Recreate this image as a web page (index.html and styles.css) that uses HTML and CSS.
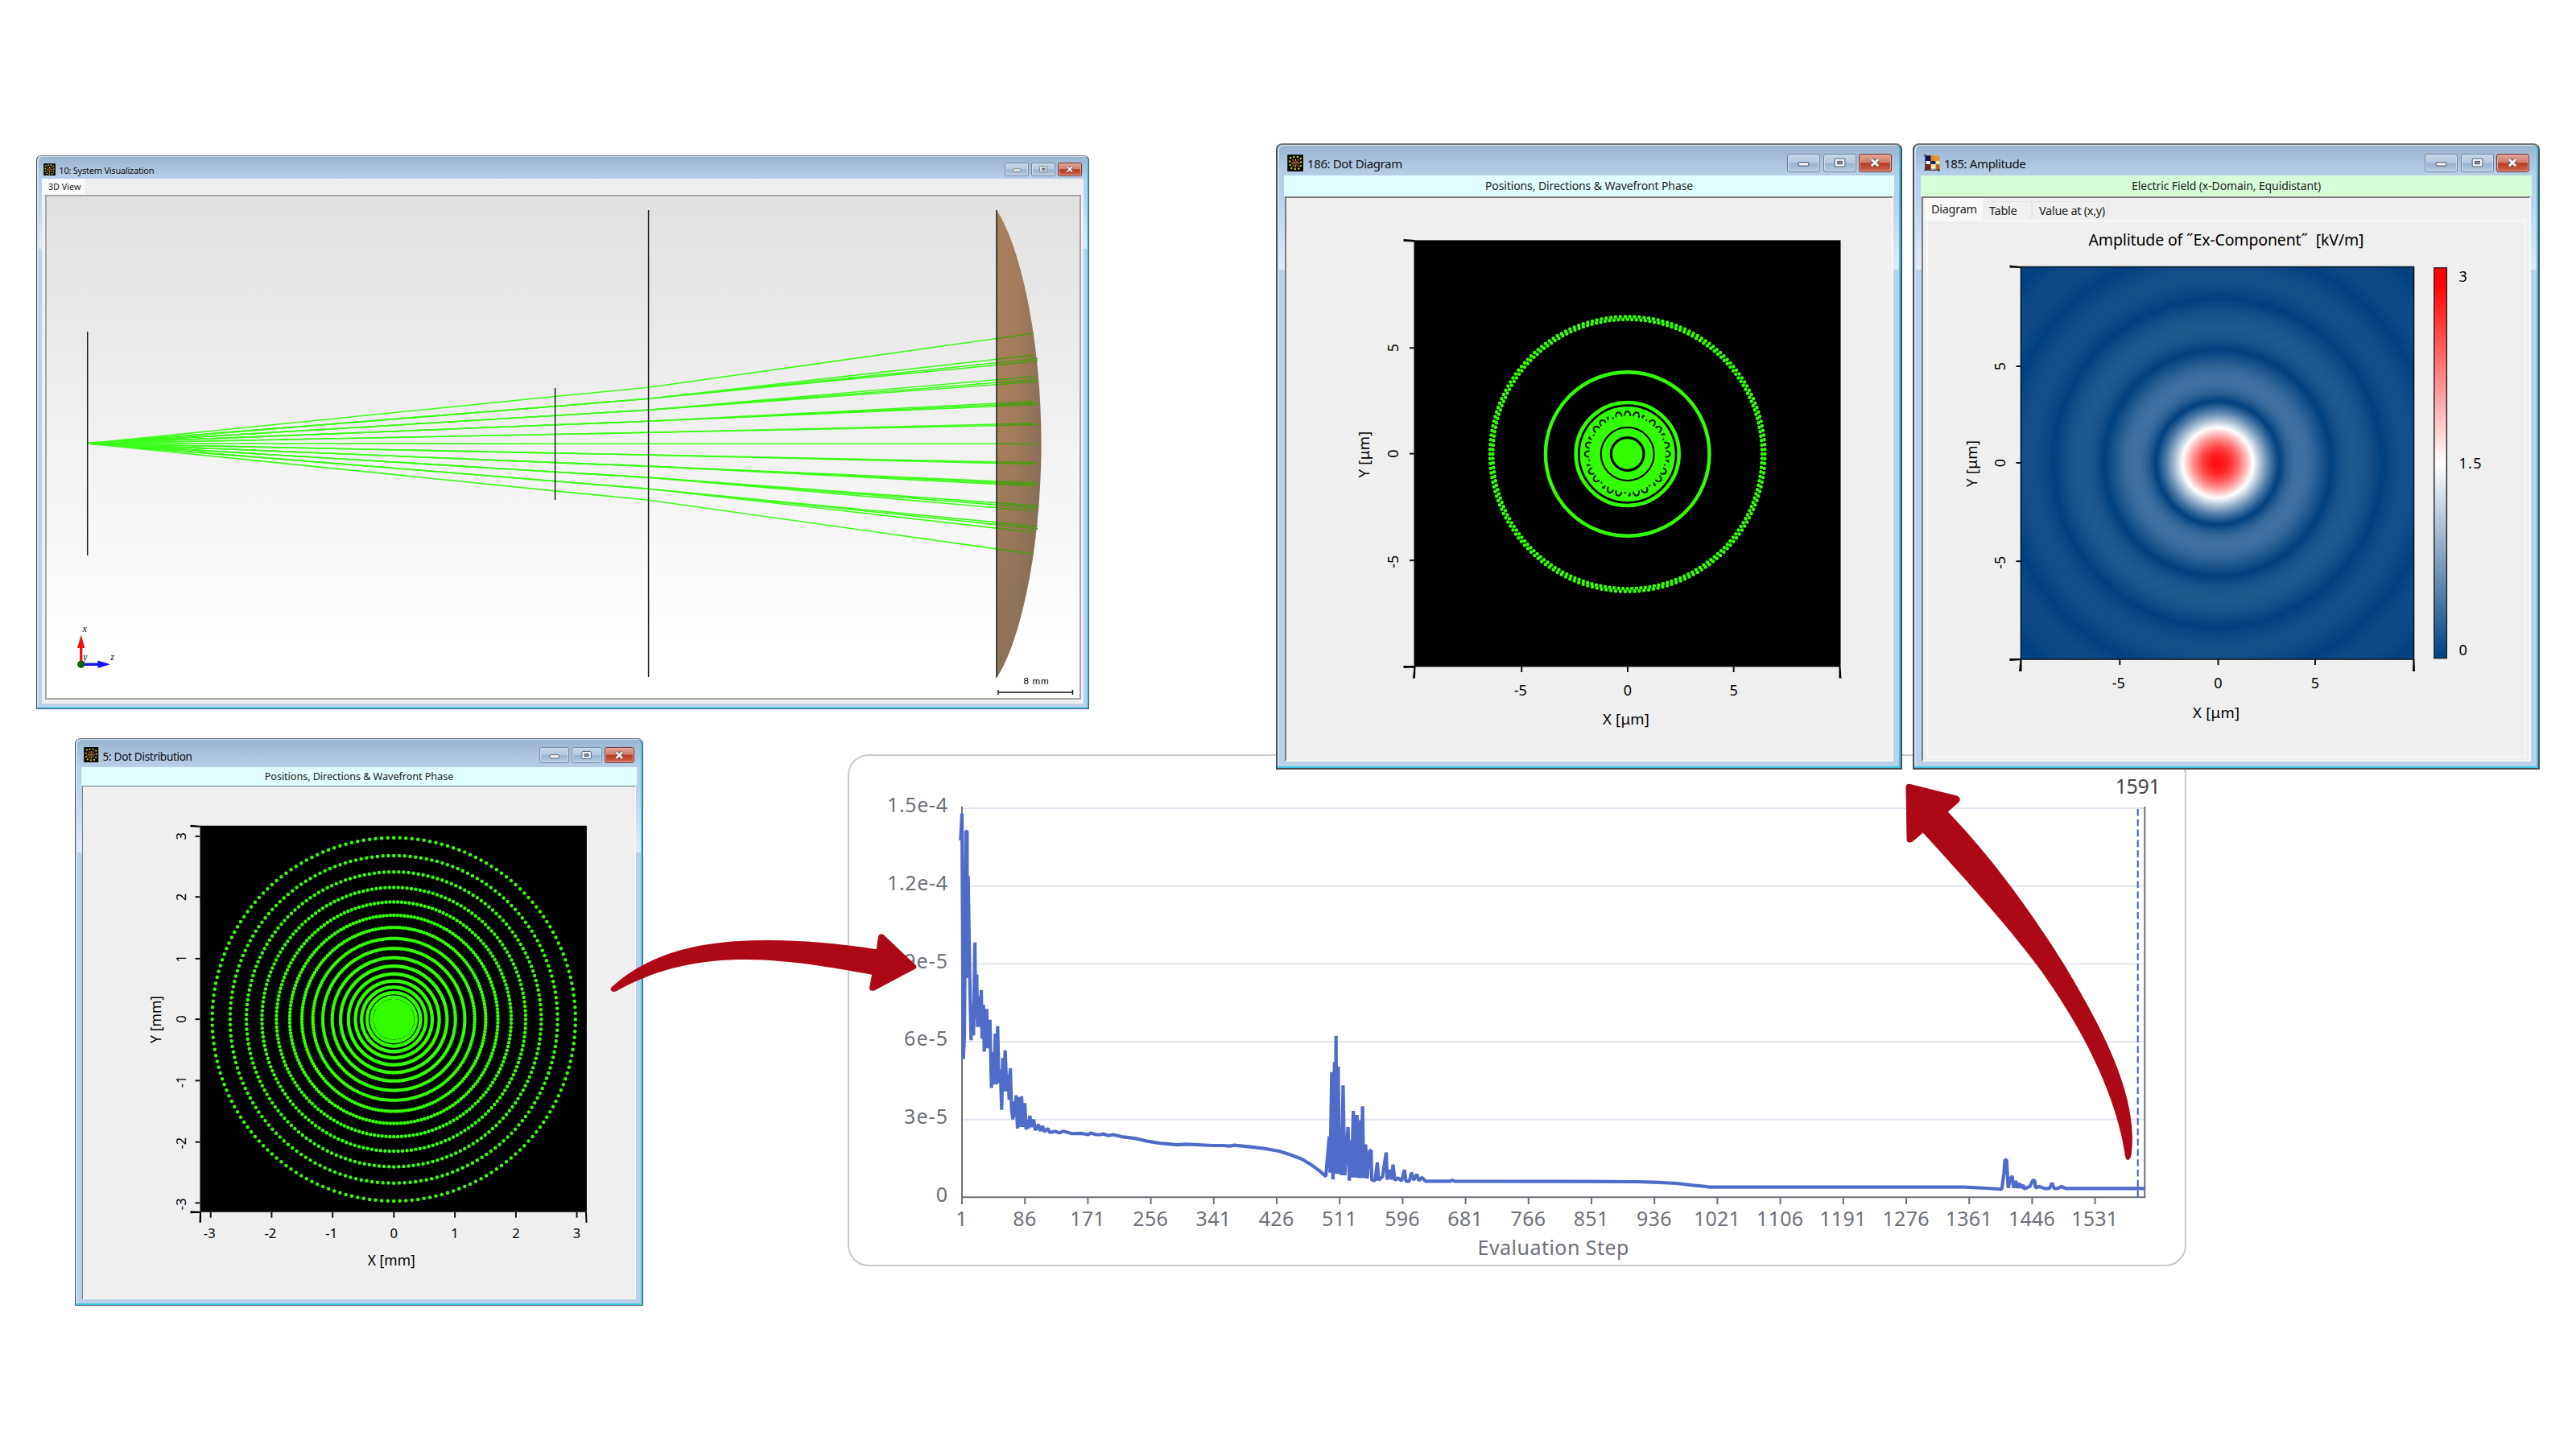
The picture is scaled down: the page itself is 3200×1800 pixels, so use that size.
FILE: index.html
```html
<!DOCTYPE html>
<html lang="en">
<head>
  <meta charset="UTF-8">
  <title>Optimization overview</title>
  <link rel="stylesheet" href="styles.css">
</head>
<body>
  <!-- shared icons -->
  <svg class="defs" width="0" height="0">
    <symbol id="icon-dots" viewBox="0 0 20 21">
      <rect width="20" height="21" fill="#0b0b06"/>
      <g fill="#c8c832">
        <circle cx="4" cy="4" r="1.2"/><circle cx="8" cy="3" r="1.2"/><circle cx="12.5" cy="3" r="1.2"/><circle cx="16.5" cy="5" r="1.2"/>
        <circle cx="3" cy="8.5" r="1.2"/><circle cx="17" cy="9.5" r="1.2"/><circle cx="3.5" cy="13" r="1.2"/><circle cx="16.5" cy="14" r="1.2"/>
        <circle cx="5" cy="17" r="1.2"/><circle cx="9.5" cy="18" r="1.2"/><circle cx="14" cy="17.5" r="1.2"/>
      </g>
      <path d="M6 6L14 15M14 6L6 15" stroke="#c2473a" stroke-width="1.8" stroke-dasharray="2 .8"/>
      <path d="M10 5.5V8M10 13V16M5 10.5H8M12 10.5H15" stroke="#9aa52e" stroke-width="1.4"/>
    </symbol>
    <symbol id="icon-field" viewBox="0 0 21 21">
      <rect x="2" y="1" width="7" height="7" fill="#14105c"/><rect x="9" y="1" width="5" height="7" fill="#f08a00"/><rect x="14" y="1" width="6" height="7" fill="#e8943a"/>
      <rect x="2" y="8" width="6" height="4" fill="#fff"/><rect x="8" y="8" width="7" height="4" fill="#1c1a66"/><rect x="15" y="8" width="5" height="4" fill="#f8f0a0"/>
      <rect x="2" y="12" width="7" height="7" fill="#7a2414"/><rect x="9" y="12" width="6" height="5" fill="#fff3b0"/><rect x="15" y="12" width="5" height="7" fill="#b8621c"/>
      <path d="M0 .8H3M2 0V19.5H21M19 18V21M0 19.5H3" fill="none" stroke="#222" stroke-width="1.2"/>
    </symbol>
    <symbol id="btn-min" viewBox="0 0 41 23">
      <rect x="13.5" y="10.5" width="14" height="5" rx="1.5" fill="#f4f4f4" stroke="#5a6678" stroke-width="1.2"/>
    </symbol>
    <symbol id="btn-max" viewBox="0 0 41 23">
      <rect x="13.5" y="5.5" width="14" height="11" rx="1.5" fill="#f4f4f4" stroke="#5a6678" stroke-width="1.2"/>
      <rect x="17.5" y="9.3" width="6" height="3.4" fill="#7f9cc4" stroke="#4a566c" stroke-width="1.2"/>
    </symbol>
    <symbol id="btn-close" viewBox="0 0 41 23">
      <path d="M15.5 6.5L24.5 15.5M24.5 6.5L15.5 15.5" stroke="#5d4a50" stroke-width="5.4"/>
      <path d="M15.5 6.5L24.5 15.5M24.5 6.5L15.5 15.5" stroke="#f6f6f6" stroke-width="3.2"/>
    </symbol>
  </svg>

  <main class="board">

    <!-- Evaluation chart -->
    <section class="chart-card">
      <svg width="1662" height="635" viewBox="1054 938 1662 635" id="chart">
        <g id="chartGrid"></g>
        <path class="axis" d="M1195 1002V1496M1194 1487.3H2665.5M2664.3 1002V1488"/>
        <g id="chartLabels"></g>
        <g class="curve">
          <path transform="translate(1040 920) scale(.33333 .42091)" d="M460 295L465 215L470 940L474 870L480 268L484 268L484 700L488 400L494 700L499 884L504 780L508 870L513 596L516 820L520 690L523 845L529 755L531 845L537 736L540 880L545 780L548 918L557 792L561 908L569 824L575 1025L582 920L586 1015L589 865L593 1015L598 843L602 1010L608 970L613 1090L617 937L621 1035L626 914L632 1035L637 985L641 1060L645 967L650 1090L655 1118L659 1065L663 1110L667 1047L672 1145L678 1052L682 1140L687 1050L692 1140L699 1070L704 1148L710 1120L712 1145L718 1107L724 1140L732 1118L738 1150L750 1133L756 1152L765 1138L772 1154L785 1145L792 1157L813 1153L828 1158L843 1153L875 1160L910 1159L935 1163L945 1158L965 1163L980 1163L993 1161L1010 1166L1028 1163L1060 1169L1110 1174L1160 1183L1210 1189L1270 1193L1300 1191L1400 1195L1442 1195"/>
          <path transform="translate(1520 1240) scale(.38265 .33333)" d="M0 549L20 551L35 548L80 553L130 560L180 570L215 583L255 600L290 625L315 647L332 664L343 515L346 650L351 275L355 676L360 237L362 650L365 140L367 655L372 255L376 655L381 490L383 660L388 325L393 660L404 480L408 680L413 530L416 668L421 420L426 668L433 435L437 670L442 455L446 670L451 403L455 670L461 545L466 672L474 568L479 568L481 678L492 679L499 612L503 678L516 665L528 575L531 676L541 640L545 676L550 620L556 678L565 670L578 680L587 640L592 682L603 682L610 650L617 678L627 656L634 680L644 668L655 682L735 682L742 679L750 682L1160 683L1340 684L1400 686L1470 690L1530 698L1568 702"/>
          <path transform="translate(2280 920) scale(.33333 .42735)" d="M-482 1296L-470 1298L0 1298L480 1298L560 1301L620 1304L628 1260L632 1219L638 1219L644 1300L653 1272L659 1266L664 1300L672 1280L678 1300L686 1287L692 1300L700 1292L704 1303L725 1296L735 1279L742 1278L746 1300L760 1296L780 1302L797 1302L808 1286L815 1302L828 1302L843 1296L858 1302L1153 1302"/>
        </g>
        <path class="marker" d="M2655.7 1005V1487"/>
        <text class="marker-label" x="2655.7" y="986" textLength="56">1591</text>
        <text class="chart-text" x="1929.5" y="1559" textLength="188" text-anchor="middle">Evaluation Step</text>
      </svg>
    </section>

    <!-- 3D system view -->
    <section class="window win-system">
      <header class="titlebar">
        <svg class="win-icon"><use href="#icon-dots"/></svg>
        <h2>10: System Visualization</h2>
        <div class="win-buttons">
          <svg class="win-btn"><use href="#btn-min"/></svg>
          <svg class="win-btn"><use href="#btn-max"/></svg>
          <svg class="win-btn close"><use href="#btn-close"/></svg>
        </div>
      </header>
      <div class="system-body">
        <div class="tab-row"><span class="tab active">3D View</span></div>
        <div class="view3d">
          <svg width="1282" height="623" viewBox="58 244 1282 623">
            <defs>
              <linearGradient id="lens" x1="0" y1="0" x2="1" y2=".25">
                <stop offset="0" stop-color="#a97f5b"/><stop offset=".5" stop-color="#a37c5a"/><stop offset="1" stop-color="#8d7058"/>
              </linearGradient>
              <linearGradient id="lensShade" x1="0" y1="0" x2="0" y2="1">
                <stop offset=".5" stop-color="#7c6a58" stop-opacity="0"/><stop offset="1" stop-color="#7c6a58" stop-opacity=".65"/>
              </linearGradient>
            </defs>
            <g id="rays"></g>
            <path fill="url(#lens)" d="M1238 261C1270 310 1293.5 430 1293.5 551S1270 793 1238 842Z"/>
            <path fill="url(#lensShade)" d="M1238 261C1270 310 1293.5 430 1293.5 551S1270 793 1238 842Z"/>
            <g id="lensRays"></g>
            <path class="plane" d="M108.7 412V690M689.6 482V621M805.6 261V841M1238 261V841.5"/>
            <path class="plane" d="M1240 860H1332.5M1240 857V863M1332.5 857V863"/>
            <text class="scale-text" x="1271.5" y="849.5" textLength="31">8 mm</text>
            <path d="M100.7 825V804" stroke="#f01414" stroke-width="3.4"/>
            <path d="M100.7 788.5L105.4 805H96Z" fill="#f01414"/>
            <path d="M100.7 825.3H122" stroke="#1414f0" stroke-width="3.4"/>
            <path d="M137 825.3L121.5 830V820.6Z" fill="#1414f0"/>
            <circle cx="100.7" cy="825.3" r="4.6" fill="#0c640c"/>
            <g class="axis-name">
              <text x="102.7" y="785">x</text><text x="103.3" y="819.5">y</text><text x="137.6" y="819.8">z</text>
            </g>
          </svg>
        </div>
      </div>
    </section>

    <!-- Dot distribution -->
    <section class="window win-distribution">
      <header class="titlebar">
        <svg class="win-icon"><use href="#icon-dots"/></svg>
        <h2>5: Dot Distribution</h2>
        <div class="win-buttons">
          <svg class="win-btn"><use href="#btn-min"/></svg>
          <svg class="win-btn"><use href="#btn-max"/></svg>
          <svg class="win-btn close"><use href="#btn-close"/></svg>
        </div>
      </header>
      <div class="band">Positions, Directions &amp; Wavefront Phase</div>
      <div class="client">
        <svg width="682" height="632" viewBox="103.5 977.3 682 632">
          <rect x="249" y="1026" width="480.4" height="480"/>
          <path d="M237 1025L249 1026V1028L237 1027.5ZM237 1504.5L249 1505V1507L237 1507.5ZM248.5 1506H250.5L250.5 1519H248ZM727.5 1506H729.5L730 1519H728Z"/>
          <g id="distTicks"></g>
          <g id="distDots" class="dots"></g>
          <text class="axis-title small" x="486.8" y="1572" textLength="59">X [mm]</text>
          <text class="axis-title small" transform="translate(200 1266.7) rotate(-90)" textLength="59">Y [mm]</text>
        </svg>
      </div>
    </section>

    <!-- Dot diagram -->
    <section class="window win-diagram">
      <header class="titlebar">
        <svg class="win-icon"><use href="#icon-dots"/></svg>
        <h2>186: Dot Diagram</h2>
        <div class="win-buttons">
          <svg class="win-btn"><use href="#btn-min"/></svg>
          <svg class="win-btn"><use href="#btn-max"/></svg>
          <svg class="win-btn close"><use href="#btn-close"/></svg>
        </div>
      </header>
      <div class="band">Positions, Directions &amp; Wavefront Phase</div>
      <div class="client">
        <svg width="751" height="697" viewBox="1598 246 751 697">
          <rect x="1756.5" y="298.4" width="530" height="530"/>
          <path d="M1743.5 297L1757 298V300.5L1743.5 300ZM1743.5 827L1757 827V829.5L1743.5 830ZM1756.5 828H1758.5L1758 842.5H1755ZM2284.5 828H2286.5L2287.5 842.5H2284.5Z"/>
          <g id="diagTicks"></g>
          <g class="dots">
            <circle cx="2021.7" cy="564" r="167.2" stroke-width="4.5" pathLength="188" stroke-dasharray="0 1"/>
            <circle cx="2021.7" cy="564" r="170.8" stroke-width="4.5" pathLength="182" stroke-dasharray="0 1"/>
            <circle cx="2021.7" cy="564" r="101.8" stroke-width="4.4"/>
            <circle cx="2021.7" cy="564" r="64" stroke-width="4.6"/>
            <circle cx="2021.7" cy="564" r="46.500" stroke-width="25"/>
            <circle cx="2021.7" cy="564" r="26.900" stroke-width="10"/>
            <circle cx="2021.7" cy="564" r="9.3" stroke-width="18.800"/>
          </g>
          <g id="curls"></g>
          <text class="axis-title" x="2019.9" y="900" textLength="58">X [μm]</text>
          <text class="axis-title" transform="translate(1701 564.6) rotate(-90)" textLength="58">Y [μm]</text>
        </svg>
      </div>
    </section>

    <!-- Amplitude -->
    <section class="window win-amplitude">
      <header class="titlebar">
        <svg class="win-icon"><use href="#icon-field"/></svg>
        <h2>185: Amplitude</h2>
        <div class="win-buttons">
          <svg class="win-btn"><use href="#btn-min"/></svg>
          <svg class="win-btn"><use href="#btn-max"/></svg>
          <svg class="win-btn close"><use href="#btn-close"/></svg>
        </div>
      </header>
      <div class="band green">Electric Field (x-Domain, Equidistant)</div>
      <div class="client">
        <div class="tabs">
          <span class="tab active">Diagram</span>
          <span class="tab">Table</span>
          <span class="tab last">Value at (x,y)</span>
        </div>
        <div class="panel">
          <svg width="740" height="664" viewBox="2395.5 275 740 664">
            <defs>
              <radialGradient id="airy" gradientUnits="userSpaceOnUse" cx="2755.5" cy="575" r="350"></radialGradient>
              <linearGradient id="scale" x1="0" y1="0" x2="0" y2="1">
                <stop offset="0" stop-color="#f00"/><stop offset=".05" stop-color="#ff0808"/><stop offset=".5" stop-color="#fff"/><stop offset="1" stop-color="#004080"/>
              </linearGradient>
            </defs>
            <text class="plot-title" x="2766" y="305" textLength="342" xml:space="preserve">Amplitude of ˝Ex-Component˝  [kV/m]</text>
            <rect x="2511" y="331.5" width="488" height="487.5" fill="url(#airy)" stroke="#0b1420" stroke-width="1.6"/>
            <path d="M2497 329.5L2511 331V333L2497 332.5ZM2497 818L2511 818V820L2497 821ZM2510 819H2512L2512 834H2508.5ZM2998 819H3000L3000.5 834H2997.5Z"/>
            <g id="ampTicks"></g>
            <rect x="3024.3" y="332.7" width="15.6" height="485" fill="url(#scale)" stroke="#222" stroke-width="1.4"/>
            <g class="tick-label left"><text x="3055" y="349.6">3</text><text x="3055" y="582" textLength="28">1.5</text><text x="3055" y="814">0</text></g>
            <text class="axis-title" x="2753.6" y="891.5" textLength="58">X [μm]</text>
            <text class="axis-title" transform="translate(2456 576) rotate(-90)" textLength="58">Y [μm]</text>
          </svg>
        </div>
      </div>
    </section>

    <!-- connecting arrows -->
    <svg class="arrows" viewBox="0 0 3200 1800">
      <path d="M760 1226C808 1183 870 1168 953 1168C1000 1168 1045 1172.5 1088.7 1179.3L1091 1163Q1093 1158.5 1098 1161.5L1137 1198.5Q1140 1201 1137 1203.5L1086 1230.5Q1080 1232 1080 1227L1083 1210.7C1030 1201 975 1192 926.7 1192C870 1192 818 1202 766 1231Q761 1233.5 758.8 1230Q758 1228 760 1226Z"/>
      <path d="M2373 974L2431 988.5Q2437.5 992 2433 997L2419.7 1008.5C2472 1062 2525 1135 2564.3 1198.6C2615 1283 2657 1365 2647.5 1435Q2646 1441 2643 1441Q2640.5 1440 2640 1436C2630 1365 2590 1280 2530 1198.6C2490 1145 2435 1085 2388.7 1034.5L2376 1045.5Q2369 1049 2368.5 1042L2367.5 978Q2368 973 2373 974Z"/>
    </svg>
  </main>

  <script>
    const NS = 'http://www.w3.org/2000/svg';

    function add(parentId, tag, attrs, text) {
      const el = document.createElementNS(NS, tag);
      for (const key in attrs) el.setAttribute(key, attrs[key]);
      if (text !== undefined) el.textContent = text;
      document.getElementById(parentId).appendChild(el);
      return el;
    }

    // chart grid, y labels and x labels
    ['1.5e-4', '1.2e-4', '9e-5', '6e-5', '3e-5', '0'].forEach((label, i) => {
      const y = 1004 + i * 96.66;
      if (i < 5) add('chartGrid', 'path', { d: `M1196 ${y}H2664`, class: 'grid' });
      add('chartLabels', 'text', { x: 1177, y: y + 5.2, class: 'chart-text', 'text-anchor': 'end', textLength: [75, 75, 54, 54, 54, 14][i] }, label);
    });
    for (let i = 0; i <= 18; i++) {
      const x = 1195 + i * 78.2;
      const label = String(1 + i * 85);
      add('chartLabels', 'path', { d: `M${x} 1487V1496`, class: 'axis' });
      add('chartLabels', 'text', { x: x - 0.5, y: 1522.5, class: 'chart-text', 'text-anchor': 'middle', textLength: label.length * 14.5 }, label);
    }

    // rays: [y at stop, y at plane, y values at the lens]
    const rays = [
      [492.5, 481.2, [420.5]],
      [504.7, 495.2, [446.3, 450.8, 453.5]],
      [516.2, 509.3, [471.7, 475.3, 477.8]],
      [527.8, 523.3, [501, 503, 504.7]],
      [539.5, 537.3, [527, 528.7]]
    ];
    const mid = 551.2;
    function drawRay(a, b, c, end) {
      add('rays', 'path', { d: `M109 550.9L689.6 ${a}L805.6 ${b}L1238 ${c}`, class: 'ray' });
      const x2 = end ? 1284 : 1289;
      add('lensRays', 'path', { d: `M1238 ${c}L${x2} ${c + (c - b) / 432 * (x2 - 1238)}`, class: 'ray inner' });
    }
    rays.forEach(([a, b, list]) => list.forEach((c, k) => {
      drawRay(a, b, c, k === 0);
      drawRay(2 * mid - a, 2 * mid - b, 2 * mid - c, k === 0);
    }));
    drawRay(mid, mid, mid);

    // plot ticks
    function ticks(id, xs, ys, xAxis, yAxis, labels, opt) {
      xs.forEach((x, i) => {
        add(id, 'path', { d: `M${x} ${xAxis}v7`, class: 'tick' });
        const shift = labels[i] < 0 ? opt.minus : 0;
        add(id, 'text', { x: x - shift, y: opt.labelY, class: 'tick-label ' + opt.size }, labels[i]);
      });
      ys.forEach((y, i) => {
        add(id, 'path', { d: `M${yAxis} ${y}h-6`, class: 'tick' });
        const shift = labels[i] < 0 ? opt.minus : 0;
        add(id, 'text', { transform: `translate(${opt.labelX} ${y + shift}) rotate(-90)`, class: 'tick-label ' + opt.size }, labels[i]);
      });
    }
    ticks('distTicks', [262.2, 337.9, 413.7, 489.8, 565.6, 641.4, 717.1], [1494.6, 1419, 1342.7, 1266.4, 1191.2, 1114.5, 1039.2],
      1506, 249, [-3, -2, -1, 0, 1, 2, 3], { labelX: 231.5, labelY: 1538.3, minus: 1.5, size: 'small' });
    ticks('diagTicks', [1890.2, 2022, 2153.7], [696.2, 563.6, 432.2], 828, 1757, [-5, 0, 5],
      { labelX: 1737.4, labelY: 864, minus: 1.5, size: '' });
    ticks('ampTicks', [2633.8, 2756, 2876.5], [697.2, 575, 455], 819, 2511, [-5, 0, 5],
      { labelX: 2491.2, labelY: 854.7, minus: 1.5, size: '' });

    // concentric dot rings
    const radii = [225.6, 203.4, 183.1, 163.8, 145.8, 129.3, 114.2, 100.5, 88.2, 76.5, 66.1, 56.4, 47.7, 40, 33.2, 27.6, 23, 19, 15.5, 12, 9, 6, 3, 1];
    radii.forEach(r => {
      add('distDots', 'circle', { cx: 489.7, cy: 1266.6, r: r, pathLength: 188, 'stroke-dasharray': '0 1', 'stroke-width': 4.5 });
    });

    // dark curls in the inner disc of the dot diagram
    for (let i = 0; i < 28; i++) {
      const deg = i * 360 / 28;
      const d = i % 3 === 2 ? 'M-3 -48v-3.5h2M3 -47v-2' : 'M-3.5 -47.5v-2.5l2 -2.8h3l2 2.8v3';
      add('curls', 'path', { d: d, transform: `translate(2021.7 564) rotate(${deg})`, class: 'curl' });
    }

    // airy pattern, |2 J1(x) / x| mapped to blue - white - red
    function j1(x) {
      let sum = 0;
      const n = 200;
      for (let i = 0; i < n; i++) {
        const t = (i + 0.5) * Math.PI / n;
        sum += Math.cos(t - x * Math.sin(t));
      }
      return sum / n;
    }
    function color(v) {
      const mix = (a, b, t) => Math.round(a + (b - a) * t);
      if (v < 0.5) return `rgb(${mix(0, 255, v * 2)},${mix(64, 255, v * 2)},${mix(128, 255, v * 2)})`;
      return `rgb(255,${mix(255, 0, v * 2 - 1)},${mix(255, 0, v * 2 - 1)})`;
    }
    for (let r = 0; r <= 350; r += 2) {
      const x = r * 3.832 / 77 || 0.001;
      const v = Math.min(1, Math.abs(2 * j1(x) / x) * 0.97);
      add('airy', 'stop', { offset: r / 350, 'stop-color': color(v) });
    }
  </script>
</body>
</html>
```
FILE: styles.css
```css
body {
  margin: 0;
  background: #fff;
  font-family: "Noto Sans", "Open Sans", sans-serif;
  color: #222;
}
.defs {
  position: absolute;
}
.board {
  position: relative;
  width: 3200px;
  height: 1800px;
  overflow: hidden;
}

/* windows */
.window {
  --u: 1;
  position: absolute;
  display: flex;
  flex-direction: column;
  box-sizing: border-box;
  padding: 0 calc(8px * var(--u)) calc(8px * var(--u));
  border: calc(2px * var(--u)) solid #4a4f55;
  border-top-color: #77777a;
  border-radius: calc(8px * var(--u)) calc(8px * var(--u)) 0 0;
  background: linear-gradient(#9ab3cf 0, #b7d0ea calc(38px * var(--u)), #b9d1ea calc(64px * var(--u)), #e0ebf8 calc(155px * var(--u)), #b9d1ea calc(155px * var(--u)));
  box-shadow: inset calc(-2px * var(--u)) calc(-2px * var(--u)) 0 #3cc6e4, inset 2px 1px 0 #cfe0f1;
}
.win-system {
  --u: .74;
  left: 45px;
  top: 193px;
  width: 1308px;
  height: 688px;
}
.win-distribution {
  --u: .909;
  left: 93px;
  top: 917px;
  width: 706px;
  height: 705px;
}
.win-diagram {
  left: 1585px;
  top: 178px;
  width: 778px;
  height: 778px;
}
.win-amplitude {
  left: 2376px;
  top: 178px;
  width: 779px;
  height: 778px;
}
.titlebar {
  display: flex;
  align-items: center;
  box-sizing: border-box;
  flex: none;
  height: calc(38px * var(--u));
  padding: calc(6px * var(--u)) calc(3px * var(--u)) 0 calc(3.5px * var(--u));
}
.win-icon {
  width: calc(20.5px * var(--u));
  height: calc(21px * var(--u));
}
.titlebar h2 {
  flex: 1;
  margin: calc(3px * var(--u)) 0 0 calc(5px * var(--u));
  font-size: calc(15px * var(--u));
  font-weight: normal;
  line-height: 1;
  letter-spacing: -.025em;
  color: #111;
}
.win-buttons {
  display: flex;
  gap: calc(3.4px * var(--u));
}
.win-btn {
  box-sizing: border-box;
  width: calc(41px * var(--u));
  height: calc(23px * var(--u));
  border: 1px solid #70869f;
  border-radius: calc(3px * var(--u));
  background: linear-gradient(#c3d5e9 0, #b4cae2 48%, #98b4d2 52%, #b5cce4 100%);
  box-shadow: inset 0 0 0 1px #cfdff0;
}
.win-btn.close {
  border-color: #6b3a3e;
  background: linear-gradient(#e3a597 0, #d27c68 46%, #b93a22 52%, #cc6a50 100%);
  box-shadow: inset 0 0 0 1px #e3a79c;
}
.band {
  flex: none;
  height: calc(26px * var(--u));
  line-height: calc(25px * var(--u));
  background: #e0ffff;
  text-align: center;
  font-size: calc(14px * var(--u));
  letter-spacing: -.008em;
}
.band.green {
  background: #d7ffd7;
}
.client {
  flex: 1;
  min-height: 0;
  margin: 0 1px;
  border: calc(2px * var(--u)) solid #f7f7f7;
  border-top-color: #7d7d7d;
  border-left-color: #7d7d7d;
  background: #efefef;
}
.client svg,
.view3d svg {
  display: block;
}

/* tabs */
.tabs {
  display: flex;
  align-items: flex-end;
  height: 27px;
  padding-left: 2px;
  font-size: 14.5px;
  letter-spacing: -.02em;
}
.tabs .tab {
  box-sizing: border-box;
  width: 60px;
  height: 23px;
  padding-left: 6px;
  border: 1px solid #e4e4e4;
  border-bottom: none;
  line-height: 21px;
  white-space: nowrap;
}
.tabs .tab.active {
  width: 73px;
  height: 27px;
  padding-left: 7px;
  border-color: #f9f9f9;
  background: #f9f9f9;
  line-height: 24px;
}
.tabs .tab.last {
  width: 95px;
  padding-left: 8px;
}
.panel {
  margin: 0 4px;
  border: 2px solid #f7f7f7;
}

/* 3D view */
.system-body {
  flex: 1;
  background: #efefef;
}
.tab-row {
  display: flex;
  height: 20px;
}
.tab-row .tab {
  width: 46px;
  padding-left: 8px;
  background: #fafafa;
  font-size: 10.8px;
  line-height: 19px;
}
.view3d {
  margin: 0 3px 0 4px;
  border: 2px solid #a6a6a6;
  background: linear-gradient(#e1e1e1, #fff 90%);
}
.plane {
  fill: none;
  stroke: #1c1c1c;
  stroke-width: 1.5;
}
.ray {
  fill: none;
  stroke: #3dff1a;
  stroke-width: 1.6;
}
.ray.inner {
  stroke: #4a9c10;
}
.scale-text {
  font-family: "Liberation Sans", sans-serif;
  font-size: 11.5px;
}
.axis-name {
  font: italic 11.5px "Liberation Serif", serif;
}

/* plots */
.tick {
  stroke: #111;
  stroke-width: 2;
}
.tick-label {
  font-size: 18px;
  text-anchor: middle;
}
.tick-label.small {
  font-size: 16.5px;
}
.tick-label.left {
  text-anchor: start;
}
.axis-title {
  font-size: 18.5px;
  text-anchor: middle;
}
.axis-title.small {
  font-size: 17.5px;
}
.plot-title {
  font-size: 19.5px;
  text-anchor: middle;
}
.dots circle {
  fill: none;
  stroke: #3f0;
  stroke-linecap: round;
}
.curl {
  fill: none;
  stroke: #061a00;
  stroke-width: 2;
}

/* evaluation chart */
.chart-card {
  position: absolute;
  left: 1053px;
  top: 937px;
  width: 1659px;
  height: 632px;
  border: 2px solid #c9c9c9;
  border-radius: 26px;
  background: #fff;
}
.chart-card svg {
  display: block;
  margin: -1px;
}
.grid {
  stroke: #e0e6f1;
  stroke-width: 2;
}
.axis {
  fill: none;
  stroke: #6e7079;
  stroke-width: 2;
}
.chart-text {
  font-size: 25px;
  fill: #6e7079;
}
.curve path {
  fill: none;
  stroke: #4f6cc8;
  stroke-width: 4.2;
  stroke-linejoin: bevel;
  vector-effect: non-scaling-stroke;
}
.marker {
  stroke: #4a68c6;
  stroke-width: 2.2;
  stroke-dasharray: 8.5 4.3;
}
.marker-label {
  font-size: 25px;
  fill: #464646;
  text-anchor: middle;
}

.arrows {
  position: absolute;
  left: 0;
  top: 0;
  width: 3200px;
  height: 1800px;
  fill: #ad0815;
}
```
